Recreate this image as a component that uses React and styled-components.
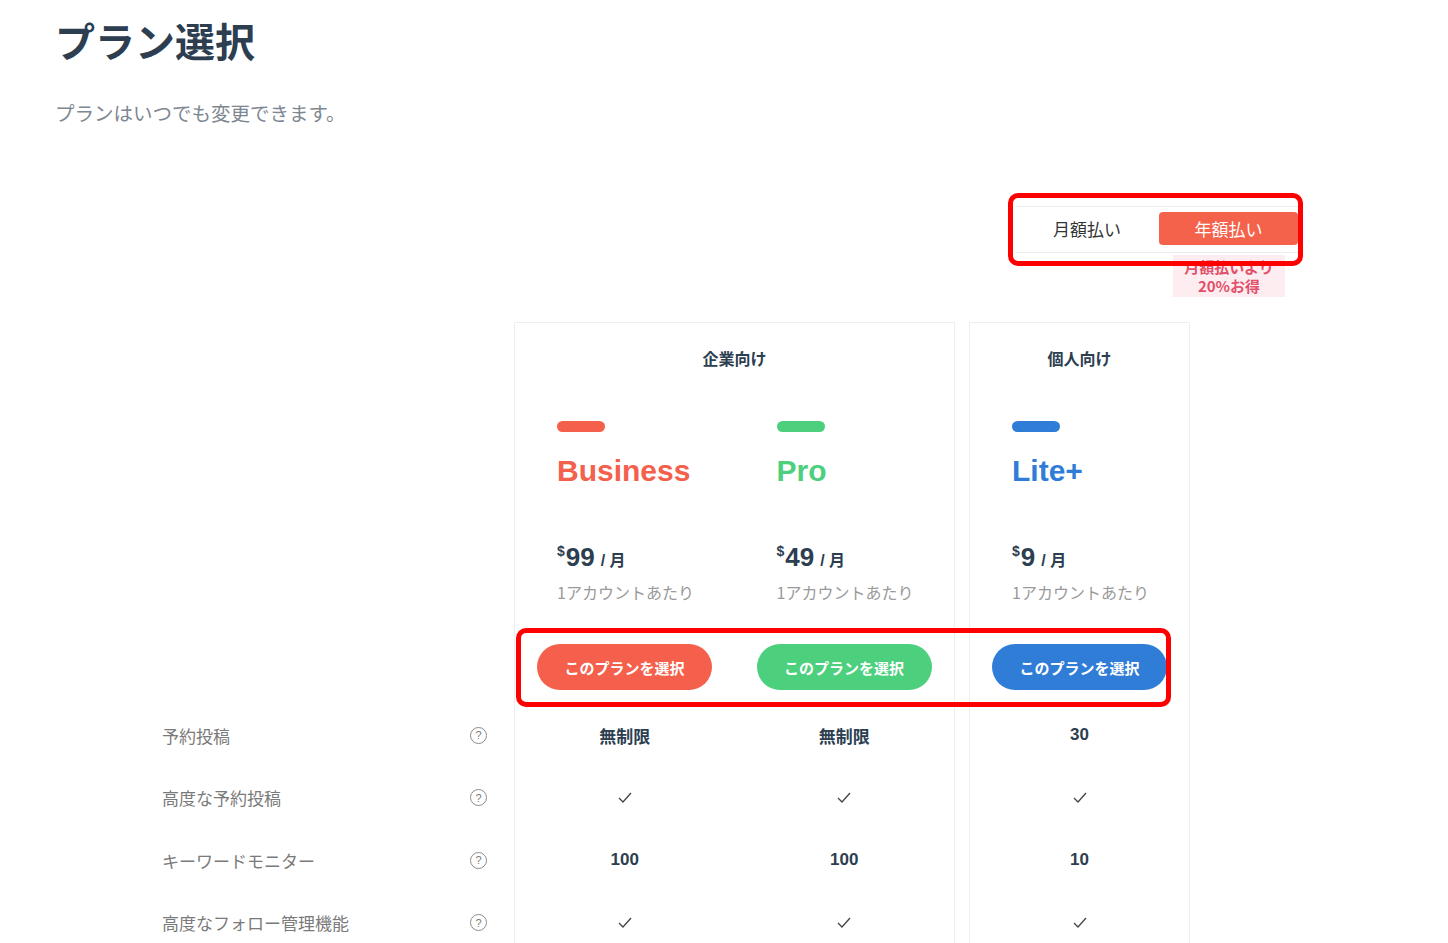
import React, { useState } from 'react';
import styled, { createGlobalStyle } from 'styled-components';

const GlobalStyle = createGlobalStyle`
  body {
    margin: 0;
    background: #ffffff;
    font-family: "Liberation Sans", "Noto Sans CJK JP", sans-serif;
    color: #2c3e50;
  }
`;

const Page = styled.div`
  width: 1243px;
  padding: 16px 0 0 55px;
`;

const Title = styled.h1`
  margin: 0;
  font-family: "Noto Sans CJK JP", sans-serif;
  font-size: 40px;
  line-height: 48px;
  font-weight: 700;
  color: #2c3e50;
`;

const Lead = styled.p`
  margin: 36px 0 0;
  font-family: "Noto Sans CJK JP", sans-serif;
  font-size: 19.5px;
  line-height: 26px;
  color: #7d8792;
`;

const ToggleRow = styled.div`
  display: flex;
  justify-content: flex-end;
  margin-top: 80px;
`;

const Toggle = styled.div`
  position: relative;
  display: flex;
  align-items: center;
  width: 283px;
  height: 47px;
  box-sizing: border-box;
  border-top: 1px solid #ececec;
  border-bottom: 1px solid #ececec;
`;

const ToggleOption = styled.button`
  border: none;
  cursor: pointer;
  font-family: "Noto Sans CJK JP", sans-serif;
  font-size: 17px;
  line-height: 20px;
  height: 33px;
  margin-top: -2px;
  border-radius: 4px;
  width: ${(p) => (p.$active ? '139px' : '144px')};
  background: ${(p) => (p.$active ? '#f4624c' : 'transparent')};
  color: ${(p) => (p.$active ? '#ffffff' : '#333333')};
  padding: 0;
`;

const Badge = styled.div`
  position: absolute;
  left: 158px;
  top: 48px;
  width: 112px;
  padding: 2px 0;
  background: #fdedf0;
  color: #e2506a;
  font-family: "Noto Sans CJK JP", sans-serif;
  font-weight: 700;
  font-size: 15px;
  line-height: 19px;
  text-align: center;
`;

const Highlight = styled.div`
  position: absolute;
  border: 5px solid #ff0000;
  border-radius: 10px;
  box-sizing: border-box;
  pointer-events: none;
  z-index: 2;
  left: ${(p) => p.$left}px;
  top: ${(p) => p.$top}px;
  width: ${(p) => p.$width}px;
  height: ${(p) => p.$height}px;
`;

const Table = styled.div`
  position: relative;
  display: grid;
  grid-template-columns: 445px 441px 221px;
  column-gap: 14px;
  margin-top: 69px;
`;

const LabelColumn = styled.div`
  padding-top: 382px;
`;

const LabelRow = styled.div`
  height: 62.5px;
  display: flex;
  align-items: center;
  justify-content: space-between;
  padding: 0 13px 0 107px;
  font-family: "Noto Sans CJK JP", sans-serif;
  font-size: 17px;
  color: #7a7a7a;
`;

const Help = styled.span`
  width: 15px;
  height: 15px;
  border: 1px solid #8a8a8a;
  border-radius: 50%;
  display: flex;
  align-items: center;
  justify-content: center;
  font-family: "Liberation Sans", sans-serif;
  font-size: 11px;
  color: #7a7a7a;
`;

const Card = styled.div`
  border: 1px solid #eeeeee;
  border-bottom: none;
`;

const CardHeader = styled.div`
  height: 70px;
  line-height: 70px;
  text-align: center;
  font-family: "Noto Sans CJK JP", sans-serif;
  font-weight: 700;
  font-size: 16px;
  color: #2c3e50;
`;

const Plans = styled.div`
  display: flex;
`;

const PlanCol = styled.div`
  flex: 1;
`;

const PlanInfo = styled.div`
  height: 311px;
  box-sizing: border-box;
  padding: 28px 0 0 42px;
`;

const Bar = styled.div`
  width: 48px;
  height: 11px;
  border-radius: 6px;
  background: ${(p) => p.$color};
`;

const PlanName = styled.div`
  margin-top: 21px;
  font-size: 30px;
  line-height: 36px;
  font-weight: 700;
  color: ${(p) => p.$color};
`;

const Price = styled.div`
  margin-top: 52px;
  height: 32px;
  line-height: 32px;
  font-weight: 700;
  color: #2c3e50;
  display: flex;
  align-items: baseline;
`;

const Dollar = styled.span`
  font-size: 14px;
  align-self: flex-start;
  line-height: 20px;
  margin-right: 1px;
`;

const Amount = styled.span`
  font-size: 26px;
`;

const Unit = styled.span`
  font-size: 16px;
  margin-left: 6px;
  font-family: "Liberation Sans", "Noto Sans CJK JP", sans-serif;
`;

const Per = styled.div`
  margin-top: 8px;
  font-family: "Noto Sans CJK JP", sans-serif;
  font-size: 16px;
  line-height: 22px;
  color: #9a9a9a;
`;

const SelectButton = styled.button`
  display: block;
  margin: 41px 0 0 -20px;
  width: 175px;
  height: 46px;
  border: none;
  border-radius: 23px;
  background: ${(p) => p.$color};
  color: #ffffff;
  font-family: "Noto Sans CJK JP", sans-serif;
  font-weight: 700;
  font-size: 15px;
  cursor: pointer;
`;

const ValueCell = styled.div`
  height: 62.5px;
  display: flex;
  align-items: center;
  justify-content: center;
  font-family: "Liberation Sans", "Noto Sans CJK JP", sans-serif;
  font-weight: 700;
  font-size: 17px;
  color: #2c3e50;
`;

const Check = () => (
  <svg width="16" height="13" viewBox="0 0 16 13">
    <path d="M2 7 L6 11 L14 2" fill="none" stroke="#444" strokeWidth="1.3" />
  </svg>
);

const features = ['予約投稿', '高度な予約投稿', 'キーワードモニター', '高度なフォロー管理機能'];

const groups = [
  {
    label: '企業向け',
    plans: [
      { name: 'Business', color: '#f4604b', price: '99', values: ['無制限', true, '100', true] },
      { name: 'Pro', color: '#4cd07d', price: '49', values: ['無制限', true, '100', true] },
    ],
  },
  {
    label: '個人向け',
    plans: [
      { name: 'Lite+', color: '#2f7dd7', price: '9', values: ['30', true, '10', true] },
    ],
  },
];

function App() {
  const [yearly, setYearly] = useState(true);

  return (
    <>
      <GlobalStyle />
      <Page>
        <Title>プラン選択</Title>
        <Lead>プランはいつでも変更できます。</Lead>
        <ToggleRow>
          <Toggle>
            <ToggleOption $active={!yearly} onClick={() => setYearly(false)}>月額払い</ToggleOption>
            <ToggleOption $active={yearly} onClick={() => setYearly(true)}>年額払い</ToggleOption>
            <Badge>
              月額払いより
              <br />
              20%お得
            </Badge>
            <Highlight $left={-7} $top={-14} $width={295} $height={73} />
          </Toggle>
        </ToggleRow>
        <Table>
          <LabelColumn>
            {features.map((f) => (
              <LabelRow key={f}>
                {f}
                <Help>?</Help>
              </LabelRow>
            ))}
          </LabelColumn>
          {groups.map((g) => (
            <Card key={g.label}>
              <CardHeader>{g.label}</CardHeader>
              <Plans>
                {g.plans.map((p) => (
                  <PlanCol key={p.name}>
                    <PlanInfo>
                      <Bar $color={p.color} />
                      <PlanName $color={p.color}>{p.name}</PlanName>
                      <Price>
                        <Dollar>$</Dollar>
                        <Amount>{p.price}</Amount>
                        <Unit>/ 月</Unit>
                      </Price>
                      <Per>1アカウントあたり</Per>
                      <SelectButton $color={p.color}>このプランを選択</SelectButton>
                    </PlanInfo>
                    {p.values.map((v, i) => (
                      <ValueCell key={i}>{v === true ? <Check /> : v}</ValueCell>
                    ))}
                  </PlanCol>
                ))}
              </Plans>
            </Card>
          ))}
          <Highlight $left={461} $top={306} $width={655} $height={79} />
        </Table>
      </Page>
    </>
  );
}

export default App;
